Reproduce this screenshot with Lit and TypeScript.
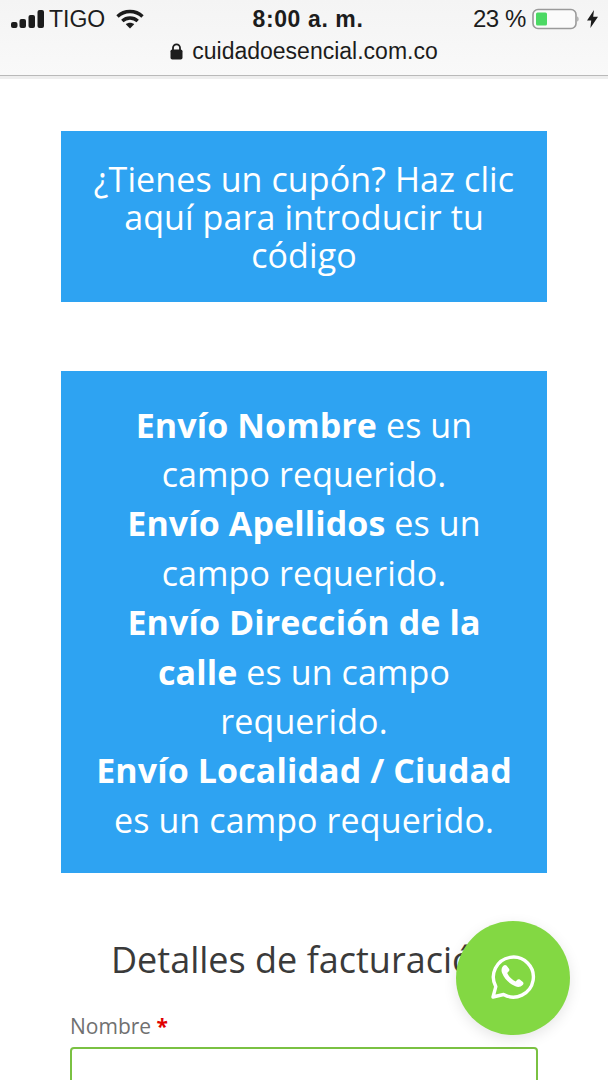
import { LitElement, html, css } from "lit";
import { customElement } from "lit/decorators.js";

@customElement("app-root")
export class AppRoot extends LitElement {
  static styles = css`
    :host {
      display: block;
      width: 608px;
      height: 1080px;
      overflow: hidden;
      position: relative;
      background: #fff;
      font-family: "Open Sans", sans-serif;
    }
    .chrome {
      height: 76px;
      box-sizing: border-box;
      background: linear-gradient(#f4f4f4, #f9f9f9);
      border-bottom: 1px solid #b9b9b9;
      font-family: "Liberation Sans", sans-serif;
      color: #1c1c1c;
    }
    .status {
      height: 38px;
      display: grid;
      grid-template-columns: 1fr auto 1fr;
      align-items: center;
      padding: 0 10px 0 11px;
      font-size: 23px;
    }
    .left, .right {
      display: flex;
      align-items: center;
    }
    .right {
      justify-content: flex-end;
    }
    .carrier {
      margin: 0 11px 0 5px;
    }
    .time {
      font-weight: 700;
      letter-spacing: 0.6px;
      margin-left: 7px;
    }
    .pct {
      margin-right: 6px;
      font-size: 24px;
      letter-spacing: -0.4px;
    }
    .url {
      display: flex;
      justify-content: center;
      align-items: center;
      gap: 9px;
      font-size: 23px;
      height: 27px;
    }
    .band {
      height: 3px;
      background: #eeeeee;
    }
    main {
      padding: 52px 61px 0;
    }
    .notice {
      background: #2ea3f2;
      color: #fff;
      text-align: center;
      box-sizing: border-box;
      letter-spacing: 0.1px;
    }
    .coupon {
      height: 171px;
      padding: 29px 30px 0;
      font-size: 34px;
      line-height: 38px;
    }
    .errors {
      margin-top: 69px;
      height: 502px;
      padding: 29.500px 30px 0;
      font-size: 34px;
      line-height: 49.400px;
    }
    .errors b {
      font-weight: 700;
    }
    h2 {
      margin: 65px 0 0 50px;
      font-size: 36px;
      line-height: 44px;
      font-weight: 400;
      color: #3a3a3a;
      white-space: nowrap;
    }
    label {
      display: block;
      margin: 30px 0 0 9px;
      font-size: 21px;
      line-height: 28px;
      color: #707070;
    }
    label span {
      color: #e00000;
      font-weight: 700;
    }
    .field {
      margin: 7px 9px 0 9px;
      height: 60px;
      box-sizing: border-box;
      border: 2px solid #7ac142;
      border-radius: 4px;
      background: #fff;
    }
    .wa {
      position: absolute;
      left: 456px;
      top: 921px;
      width: 114px;
      height: 114px;
      padding-bottom: 2px;
      box-sizing: border-box;
      border-radius: 50%;
      background: #83d843;
      display: flex;
      align-items: center;
      justify-content: center;
      box-shadow: 0 4px 14px rgba(0, 0, 0, 0.1);
    }
  `;

  render() {
    return html`
      <div class="chrome">
        <div class="status">
          <div class="left">
            <svg width="33" height="20" viewBox="0 0 33 20" fill="#1c1c1c">
              <rect x="0" y="13" width="6.500" height="6" rx="2"></rect>
              <rect x="8.500" y="10" width="6.500" height="9" rx="2"></rect>
              <rect x="17.500" y="6" width="6.500" height="13" rx="2"></rect>
              <rect x="26.500" y="1" width="6.500" height="18" rx="2"></rect>
            </svg>
            <span class="carrier">TIGO</span>
            <svg width="28" height="20" viewBox="0 0 28 20" fill="none" stroke="#1c1c1c" stroke-width="3.400">
              <path d="M1.500 7.500C8.500 .8 19.500 .8 26.500 7.500"></path>
              <path d="M6.300 12C10.600 8 17.400 8 21.700 12"></path>
              <path d="M14 19.500L9.800 15.200C12 13.200 16 13.200 18.200 15.200Z" fill="#1c1c1c" stroke="none"></path>
            </svg>
          </div>
          <div class="time">8:00 a. m.</div>
          <div class="right">
            <span class="pct">23 %</span>
            <svg width="47" height="22" viewBox="0 0 47 22">
              <rect x="1" y="1.500" width="43" height="19" rx="5" fill="#fbfbfb" stroke="#9a9a9a" stroke-width="1.600"></rect>
              <rect x="4" y="4.500" width="11" height="13" rx="1.500" fill="#4cd964"></rect>
              <path d="M45.500 8.500c1.200.4 1.200 4.600 0 5z" fill="#777"></path>
            </svg>
            <svg style="margin-left:8px" width="11" height="18" viewBox="0 0 11 18" fill="#1c1c1c">
              <path d="M7 0L0 10.500H4.200L3.400 18L11 6.800H6.200Z"></path>
            </svg>
          </div>
        </div>
        <div class="url">
          <svg width="13" height="17" viewBox="0 0 13 17">
            <path d="M3 7V4.800a3.500 3.500 0 0 1 7 0V7" fill="none" stroke="#1c1c1c" stroke-width="1.800"></path>
            <rect x="0.500" y="6.500" width="12" height="10" rx="1.800" fill="#1c1c1c"></rect>
          </svg>
          <span>cuidadoesencial.com.co</span>
        </div>
      </div>
      <div class="band"></div>
      <main>
        <div class="notice coupon">¿Tienes un cupón? Haz clic aquí para introducir tu código</div>
        <div class="notice errors">
          <b>Envío Nombre</b> es un campo requerido.<br />
          <b>Envío Apellidos</b> es un campo requerido.<br />
          <b>Envío Dirección de la calle</b> es un campo requerido.<br />
          <b>Envío Localidad / Ciudad</b> es un campo requerido.
        </div>
        <h2>Detalles de facturación</h2>
        <label>Nombre <span>*</span></label>
        <div class="field"></div>
      </main>
      <div class="wa">
        <svg width="48" height="48" viewBox="0 0 48 48">
          <path d="M4 44l2.800-10.400A20 20 0 1 1 14.600 41.500Z" fill="none" stroke="#fff" stroke-width="3.400" stroke-linejoin="round"></path>
          <path d="M17.500 12.500c-1-.9-2.300-.7-3.100.2-1.900 2-2.400 4.500-1.300 7.300 2.400 6 7.200 10.800 13.300 13.300 2.800 1.100 5.400.6 7.300-1.300.9-.9 1.100-2.200.2-3.100l-3.100-2.300c-.9-.6-1.800-.5-2.500.2l-1.600 1.600c-3.700-1.500-6.900-4.700-8.500-8.500l1.600-1.600c.7-.7.8-1.600.2-2.500Z" fill="#fff"></path>
        </svg>
      </div>
    `;
  }
}
